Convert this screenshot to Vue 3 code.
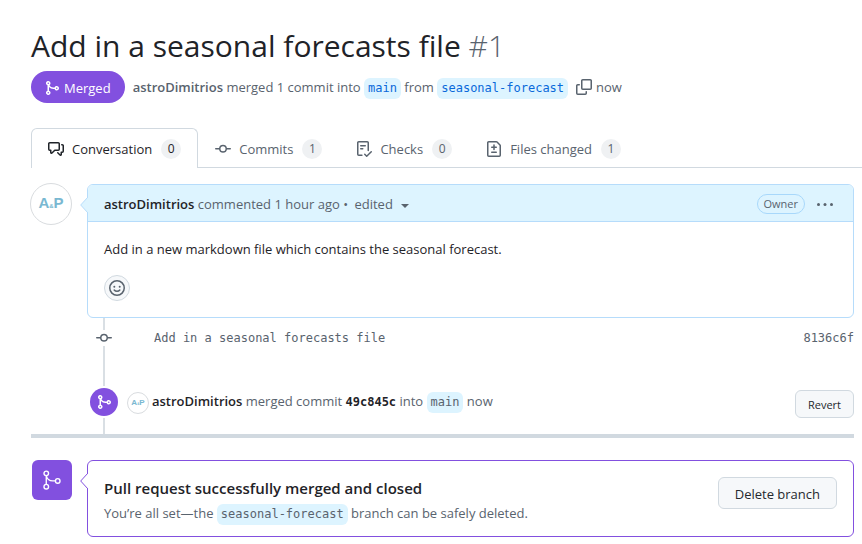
<script setup>
const icons = {
  merge:
    'M5.45 5.154A4.25 4.25 0 0 0 9.25 7.5h1.378a2.251 2.251 0 1 1 0 1.5H9.25A5.734 5.734 0 0 1 5 7.123v3.505a2.25 2.25 0 1 1-1.5 0V5.372a2.25 2.25 0 1 1 1.95-.218ZM4.25 13.5a.75.75 0 1 0 0-1.5.75.75 0 0 0 0 1.5Zm8.5-4.5a.75.75 0 1 0 0-1.5.75.75 0 0 0 0 1.5ZM5 3.25a.75.75 0 1 0-1.5 0 .75.75 0 0 0 1.5 0Z',
  discussion:
    'M1.75 1h8.5c.966 0 1.75.784 1.75 1.75v5.5A1.75 1.75 0 0 1 10.25 10H7.061l-2.574 2.573A1.458 1.458 0 0 1 2 11.543V10h-.25A1.75 1.75 0 0 1 0 8.25v-5.5C0 1.784.784 1 1.75 1ZM1.5 2.75v5.5c0 .138.112.25.25.25h1a.75.75 0 0 1 .75.75v2.19l2.72-2.72a.749.749 0 0 1 .53-.22h3.5a.25.25 0 0 0 .25-.25v-5.5a.25.25 0 0 0-.25-.25h-8.5a.25.25 0 0 0-.25.25Zm13 2a.25.25 0 0 0-.25-.25h-.5a.75.75 0 0 1 0-1.5h.5c.966 0 1.75.784 1.75 1.75v5.5A1.75 1.75 0 0 1 14.25 12H14v1.543a1.458 1.458 0 0 1-2.487 1.03L9.22 12.28a.749.749 0 1 1 1.06-1.06l2.22 2.22v-2.19a.75.75 0 0 1 .75-.75h1a.25.25 0 0 0 .25-.25Z',
  commit:
    'M11.93 8.5a4.002 4.002 0 0 1-7.86 0H.75a.75.75 0 0 1 0-1.5h3.32a4.002 4.002 0 0 1 7.86 0h3.32a.75.75 0 0 1 0 1.5Zm-1.43-.75a2.5 2.5 0 1 0-5 0 2.5 2.5 0 0 0 5 0Z',
  checklist:
    'M2.5 1.75v11.5c0 .138.112.25.25.25h3.17a.75.75 0 0 1 0 1.5H2.75A1.75 1.75 0 0 1 1 13.25V1.75C1 .784 1.784 0 2.75 0h8.5C12.216 0 13 .784 13 1.75v7.736a.75.75 0 0 1-1.5 0V1.75a.25.25 0 0 0-.25-.25h-8.5a.25.25 0 0 0-.25.25Zm13.274 9.537-4.557 4.45a.75.75 0 0 1-1.055-.008l-1.943-1.95a.75.75 0 0 1 1.062-1.058l1.419 1.425 4.026-3.932a.75.75 0 1 1 1.048 1.074ZM4.75 4h4.5a.75.75 0 0 1 0 1.5h-4.5a.75.75 0 0 1 0-1.5ZM4 7.75A.75.75 0 0 1 4.75 7h2a.75.75 0 0 1 0 1.5h-2A.75.75 0 0 1 4 7.75Z',
  diff:
    'M1 1.75C1 .784 1.784 0 2.75 0h7.586c.464 0 .909.184 1.237.513l2.914 2.914c.329.328.513.773.513 1.237v9.586A1.75 1.75 0 0 1 13.25 16H2.75A1.75 1.75 0 0 1 1 14.25Zm1.75-.25a.25.25 0 0 0-.25.25v12.5c0 .138.112.25.25.25h10.5a.25.25 0 0 0 .25-.25V4.664a.25.25 0 0 0-.073-.177l-2.914-2.914a.25.25 0 0 0-.177-.073ZM8 3.25a.75.75 0 0 1 .75.75v1.5h1.5a.75.75 0 0 1 0 1.5h-1.5v1.5a.75.75 0 0 1-1.5 0V7h-1.5a.75.75 0 0 1 0-1.5h1.5V4A.75.75 0 0 1 8 3.25Zm-3 8a.75.75 0 0 1 .75-.75h4.5a.75.75 0 0 1 0 1.5h-4.5a.75.75 0 0 1-.75-.75Z',
  copy:
    'M0 6.75C0 5.784.784 5 1.75 5h1.5a.75.75 0 0 1 0 1.5h-1.5a.25.25 0 0 0-.25.25v7.5c0 .138.112.25.25.25h7.5a.25.25 0 0 0 .25-.25v-1.5a.75.75 0 0 1 1.5 0v1.5A1.75 1.75 0 0 1 9.25 16h-7.5A1.75 1.75 0 0 1 0 14.25ZM5 1.75C5 .784 5.784 0 6.75 0h7.5C15.216 0 16 .784 16 1.75v7.5A1.75 1.75 0 0 1 14.25 11h-7.5A1.75 1.75 0 0 1 5 9.25Zm1.75-.25a.25.25 0 0 0-.25.25v7.5c0 .138.112.25.25.25h7.5a.25.25 0 0 0 .25-.25v-7.5a.25.25 0 0 0-.25-.25Z',
}

const tabs = [
  { label: 'Conversation', count: 0, icon: icons.discussion, active: true },
  { label: 'Commits', count: 1, icon: icons.commit },
  { label: 'Checks', count: 0, icon: icons.checklist },
  { label: 'Files changed', count: 1, icon: icons.diff },
]
</script>

<template>
  <main class="page">
    <h1 class="title">Add in a seasonal forecasts file <span class="number">#1</span></h1>

    <div class="meta">
      <span class="state">
        <svg class="icon" viewBox="0 0 16 16" aria-hidden="true"><path :d="icons.merge" /></svg>
        Merged
      </span>
      <p class="summary">
        <a href="#" class="author muted">astroDimitrios</a> merged 1 commit into
        <a href="#" class="branch link">main</a> from
        <a href="#" class="branch link">seasonal-forecast</a>
      </p>
      <button type="button" class="plain" aria-label="Copy">
        <svg class="icon" viewBox="0 0 16 16" aria-hidden="true"><path :d="icons.copy" /></svg>
      </button>
      <span class="when">now</span>
    </div>

    <nav class="tabs">
      <a v-for="tab in tabs" :key="tab.label" href="#" class="tab" :class="{ active: tab.active }">
        <svg class="icon" viewBox="0 0 16 16" aria-hidden="true"><path :d="tab.icon" /></svg>
        <span>{{ tab.label }}</span>
        <span class="count">{{ tab.count }}</span>
      </a>
    </nav>

    <section class="entry">
      <a href="#" class="avatar"><span class="initials">A<small>&amp;</small>P</span></a>
      <article class="card comment">
        <svg class="pointer" viewBox="0 0 8 16" aria-hidden="true"><path d="M8 0 .7 8 8 16" /></svg>
        <header class="comment-head">
          <p class="byline">
            <a href="#" class="author">astroDimitrios</a> commented 1 hour ago •
            <button type="button" class="plain edited">edited <i class="caret"></i></button>
          </p>
          <span class="role">Owner</span>
          <button type="button" class="plain" aria-label="Options">
            <svg class="icon" viewBox="0 0 16 16" aria-hidden="true">
              <circle cx="1.5" cy="8.5" r="1.5" /><circle cx="8" cy="8.5" r="1.5" /><circle cx="14.5" cy="8.5" r="1.5" />
            </svg>
          </button>
        </header>
        <div class="comment-body">
          <p>Add in a new markdown file which contains the seasonal forecast.</p>
          <button type="button" class="react" aria-label="React">
            <svg class="icon" viewBox="0 0 16 16" aria-hidden="true">
              <circle class="stroke" cx="8" cy="8" r="7.25" />
              <circle cx="5.3" cy="6.7" r="1" /><circle cx="10.7" cy="6.7" r="1" />
              <path class="stroke" d="M5.2 10c1.4 1.7 4.2 1.7 5.6 0" />
            </svg>
          </button>
        </div>
      </article>
    </section>

    <div class="timeline">
      <div class="event commit">
        <span class="node"><svg class="icon" viewBox="0 0 16 16" aria-hidden="true"><path :d="icons.commit" /></svg></span>
        <a href="#" class="message">Add in a seasonal forecasts file</a>
        <a href="#" class="hash">8136c6f</a>
      </div>
      <div class="event merged">
        <span class="node"><span class="disc"><svg class="icon" viewBox="0 0 16 16" aria-hidden="true"><path :d="icons.merge" /></svg></span></span>
        <a href="#" class="avatar small"><span class="initials">A<small>&amp;</small>P</span></a>
        <p class="event-text">
          <a href="#" class="author">astroDimitrios</a> merged commit
          <a href="#" class="sha">49c845c</a> into <span class="branch">main</span> now
        </p>
        <button type="button" class="button compact">Revert</button>
      </div>
    </div>

    <section class="entry outcome">
      <span class="tile">
        <svg viewBox="0 0 24 24" aria-hidden="true">
          <g class="stroke">
            <circle cx="5.75" cy="4.75" r="2.5" /><circle cx="5.75" cy="19.25" r="2.5" /><circle cx="18.25" cy="13" r="2.5" />
            <path d="M5.75 7.25v9.5M5.75 7.25C6.5 10.6 9.3 13 12.75 13h3" />
          </g>
        </svg>
      </span>
      <div class="card result">
        <svg class="pointer" viewBox="0 0 8 16" aria-hidden="true"><path d="M8 0 .7 8 8 16" /></svg>
        <div class="result-text">
          <h2>Pull request successfully merged and closed</h2>
          <p>You’re all set—the <span class="branch">seasonal-forecast</span> branch can be safely deleted.</p>
        </div>
        <button type="button" class="button">Delete branch</button>
      </div>
    </section>
  </main>
</template>

<style>
body {
  background: #fff;
}
</style>

<style scoped>
.page {
  padding: 24px 8px 7px 31px;
  color: #1f2328;
  font: 13px/20px "Open Sans", "Noto Sans", sans-serif;
}
h1, h2, p { margin: 0; }
a { color: inherit; text-decoration: none; }
button { font: inherit; color: inherit; cursor: pointer; }
.icon {
  display: block;
  flex: none;
  width: 16px;
  height: 16px;
  fill: currentColor;
}
.stroke {
  fill: none;
  stroke: currentColor;
  stroke-width: 1.5;
  stroke-linecap: round;
}
.plain {
  padding: 0;
  border: 0;
  background: none;
  color: #59636e;
}
.title {
  font-size: 30px;
  font-weight: 400;
  line-height: 44px;
}
.number { color: #59636e; font-weight: 300; }
.author { color: #1f2328; font-weight: 600; }
.author.muted { color: #59636e; }
.meta {
  display: flex;
  align-items: center;
  margin-top: 3px;
  color: #59636e;
}
.state {
  display: flex;
  align-items: center;
  gap: 4px;
  height: 30px;
  margin-right: 8px;
  padding: 2px 14px 0 13px;
  border-radius: 16px;
  background: #8250df;
  color: #fff;
}
.summary { margin-right: 8px; padding-top: 2px; }
.when { margin-left: 4px; }
.branch, .message, .hash, .sha {
  font-family: "DejaVu Sans Mono", monospace;
  font-size: 12px;
}
.branch {
  display: inline-block;
  padding: 0 4px;
  border-radius: 6px;
  background: #ddf4ff;
  line-height: 21px;
}
.branch.link { color: #0969da; }
.tabs {
  display: flex;
  margin: 25px -8px 0 0;
  border-bottom: 1px solid #d1d9e0;
}
.tab {
  display: flex;
  align-items: center;
  gap: 8px;
  height: 40px;
  margin-bottom: -1px;
  padding: 0 16px;
  border: solid transparent;
  border-width: 1px 1px 0;
  box-sizing: border-box;
  color: #59636e;
}
.tab.active {
  border-color: #d1d9e0;
  border-radius: 6px 6px 0 0;
  background: #fff;
  color: #1f2328;
}
.count {
  min-width: 20px;
  margin-left: 1px;
  border-radius: 10px;
  background: #eff1f3;
  font-size: 12px;
  text-align: center;
}
.entry {
  display: flex;
  gap: 15px;
  align-items: flex-start;
  margin-top: 16px;
}
.avatar {
  display: flex;
  flex: none;
  align-items: center;
  justify-content: center;
  width: 42px;
  height: 42px;
  box-sizing: border-box;
  margin: -1px 0 0 -1px;
  border: 1px solid #d9dcdf;
  border-radius: 50%;
  color: #79b8d1;
}
.initials { font: 700 15px/20px "Liberation Sans", sans-serif; }
.initials small { font-size: 6px; }
.avatar.small { width: 22px; height: 22px; }
.avatar.small .initials { font-size: 8px; }
.avatar.small small { font-size: 3px; }
.card {
  position: relative;
  flex: 1;
  min-width: 0;
  border: 1px solid #b6dcfb;
  border-radius: 6px;
}
.pointer {
  position: absolute;
  top: 12px;
  left: -8px;
  width: 8px;
  height: 16px;
  fill: #ddf4ff;
  stroke: #b6dcfb;
}
.comment-head {
  display: flex;
  align-items: center;
  padding: 9px 20px 7px 16px;
  border-bottom: 1px solid #b6dcfb;
  border-radius: 5px 5px 0 0;
  background: #ddf4ff;
  color: #59636e;
}
.byline { flex: 1; }
.edited { margin-left: 3px; }
.caret {
  display: inline-block;
  margin-left: 5px;
  border: 4px solid transparent;
  border-top-color: currentColor;
  border-bottom: 0;
  vertical-align: middle;
}
.role {
  margin-right: 12px;
  padding: 0 6px;
  border: 1px solid #a8d8fb;
  border-radius: 10px;
  font-size: 11px;
  line-height: 18px;
}
.comment-body { padding: 17px 16px 16px; }
.react {
  display: flex;
  align-items: center;
  justify-content: center;
  width: 26px;
  height: 26px;
  margin-top: 16px;
  padding: 0;
  border: 1px solid #d1d9e0;
  border-radius: 50%;
  background: #f6f8fa;
  color: #59636e;
}
.timeline {
  border-bottom: 4px solid #d1d9e0;
  color: #59636e;
}
.event {
  display: flex;
  align-items: center;
  padding-left: 59px;
}
.node {
  display: flex;
  flex-direction: column;
  flex: none;
  align-items: center;
  align-self: stretch;
  width: 28px;
}
.node::before, .node::after {
  content: "";
  width: 2px;
  background: #d9dfe4;
}
.node::before { height: 12px; }
.node::after { flex: 1; }
.commit { height: 40px; padding-bottom: 2px; }
.commit .node { margin-bottom: -2px; }
.message { flex: 1; margin-left: 36px; }
.merged { height: 74px; }
.merged .node::before { height: 26px; }
.disc {
  display: grid;
  place-items: center;
  width: 28px;
  height: 28px;
  margin: 2px 0;
  border-radius: 50%;
  background: #8250df;
  color: #fff;
}
.merged .avatar { margin: 12px 3px 0 9px; }
.event-text { flex: 1; padding-top: 10px; }
.sha { color: #1f2328; font-weight: 700; }
.button {
  flex: none;
  padding: 6px 16px 4px;
  border: 1px solid #d1d9e0;
  border-radius: 6px;
  background: #f6f8fa;
  color: #25292e;
}
.button.compact { margin-top: 14px; padding: 4px 12px 2px; font-size: 11px; }
.outcome { margin-top: 22px; }
.tile {
  display: grid;
  flex: none;
  place-items: center;
  width: 40px;
  height: 40px;
  margin-left: 1px;
  border-radius: 6px;
  background: #8250df;
  color: #fff;
}
.tile svg { width: 22px; height: 22px; }
.result {
  display: flex;
  align-items: flex-start;
  padding: 16px 16px 11px;
  border-color: #8250df;
}
.result .pointer { fill: #fff; stroke: #8250df; }
.result-text { flex: 1; color: #59636e; }
h2 { margin-bottom: 4px; color: #1f2328; font-size: 15px; font-weight: 600; line-height: 22px; }
</style>
